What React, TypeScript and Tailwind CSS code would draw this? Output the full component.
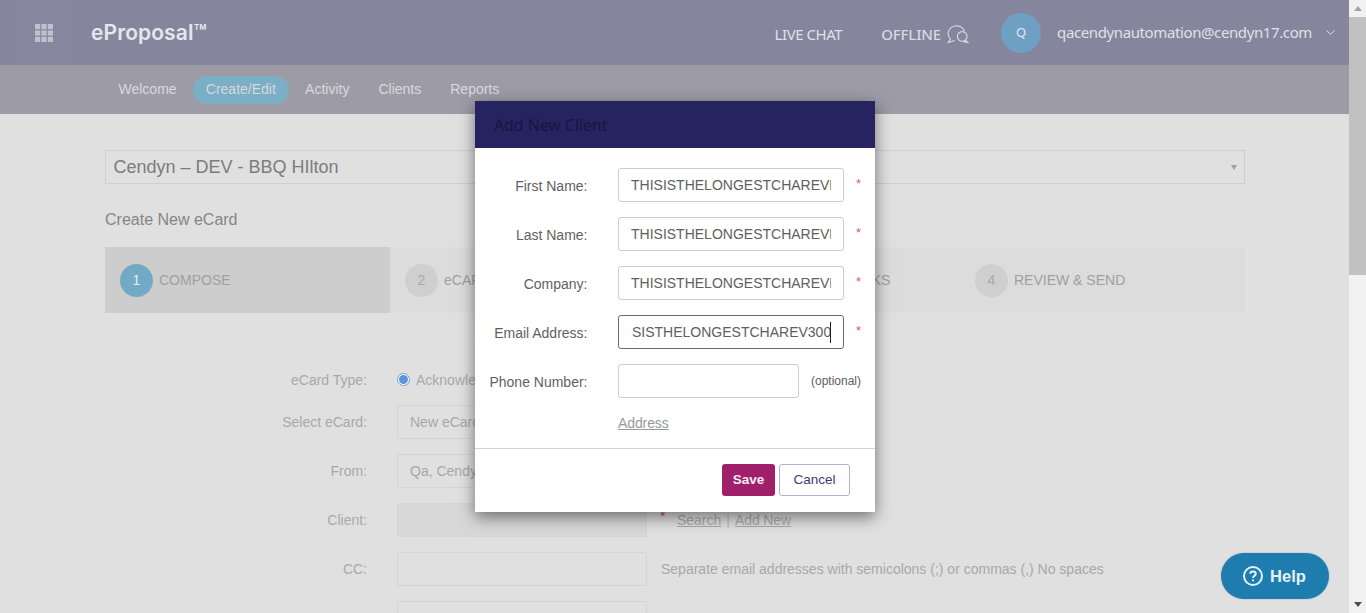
import React from "react";
import { ChevronDown } from "lucide-react";

const arial = "font-['Liberation_Sans',Arial,sans-serif]";

function NavItem({ label, active }: { label: string; active?: boolean }) {
  return (
    <span className={`flex h-[28px] items-center rounded-full px-[13px] text-[14px] text-[#d8d8df] ${active ? "w-[96.5px] justify-center bg-[#7aafc6]" : ""}`}>
      {label}
    </span>
  );
}

function Step({ n, label, active, w }: { n: number; label: string; active?: boolean; w: string }) {
  return (
    <div className={`flex h-full items-center gap-[6px] pl-[15px] ${w} ${active ? "bg-[#cdcdcd]" : ""}`}>
      <span className={`flex h-[33px] w-[33px] items-center justify-center rounded-full text-[14px] ${active ? "bg-[#72a9c4] text-[#e4eef3]" : "bg-[#cfcfcf] text-[#a8a8a8]"}`}>
        {n}
      </span>
      <span className="text-[14px] text-[#a0a0a0]">{label}</span>
    </div>
  );
}

function BackRow({ label, children, h, mb }: { label: string; children: React.ReactNode; h: string; mb: string }) {
  return (
    <div className={`flex items-center ${h} ${mb}`}>
      <span className="w-[262px] text-right text-[14px] text-[#a8a8a8]">{label}</span>
      <div className="ml-[30px] flex items-center">{children}</div>
    </div>
  );
}

const backBox = "h-[34px] w-[250px] rounded-[2px] border border-[#d4d4d4] px-[12px] text-[14px] leading-[32px] text-[#a8a8a8]";

function ModalRow({ label, value, focused }: { label: string; value: string; focused?: boolean }) {
  return (
    <div className="mb-[15px] flex h-[34px] items-center">
      <span className="w-[112.5px] pt-[2px] text-right text-[14px] text-[#5f5f5f]">{label}</span>
      <div className={`ml-[30.5px] flex h-[34px] w-[226px] items-center overflow-hidden rounded-[3px] border px-[12px] ${focused ? "border-[#6a6a6a]" : "border-[#cccccc]"}`}>
        <span className={`block w-[200px] overflow-hidden whitespace-nowrap text-[14px] text-[#606060] ${focused ? "border-r border-[#222222] pl-[1px]" : ""}`}>{value}</span>
      </div>
      <span className="ml-[12px] -mt-[3px] text-[13px] text-[#df5a72]">*</span>
    </div>
  );
}

export default function App() {
  return (
    <div className={`relative flex h-[613px] w-[1366px] overflow-hidden bg-[#e0e0e0] ${arial}`}>
      <div className="flex h-full w-[1349px] flex-col">
        <header className="flex h-[65px] shrink-0 items-center bg-[#85859d]">
          <div className="ml-[15px] flex h-full w-[60px] items-center bg-[#86869e] pl-[20px]">
            <svg width="18" height="18" viewBox="0 0 18 18" fill="#bfbfcd" aria-hidden="true">
              <rect x="0" y="0" width="5.2" height="5.2" /><rect x="6.4" y="0" width="5.2" height="5.2" /><rect x="12.8" y="0" width="5.2" height="5.2" />
              <rect x="0" y="6.4" width="5.2" height="5.2" /><rect x="6.4" y="6.4" width="5.2" height="5.2" /><rect x="12.8" y="6.4" width="5.2" height="5.2" />
              <rect x="0" y="12.8" width="5.2" height="5.2" /><rect x="6.4" y="12.8" width="5.2" height="5.2" /><rect x="12.8" y="12.8" width="5.2" height="5.2" />
            </svg>
          </div>
          <span className="ml-[16px] mt-[1px] font-['Inter',sans-serif] text-[21px] font-semibold tracking-[0.1px] text-[#e6e6ec]">eProposal™</span>
          <div className="ml-auto flex items-center">
            <span className="mt-[3px] font-['Noto_Sans',sans-serif] text-[15px] tracking-[-0.45px] text-[#e0e0e8]">LIVE CHAT</span>
            <span className="ml-[39px] mt-[3px] font-['Noto_Sans',sans-serif] text-[15px] font-medium tracking-[-0.15px] text-[#d8d8e2]">OFFLINE</span>
            <svg className="ml-[6px] mt-[3px]" width="22" height="19" viewBox="0 0 22 19" fill="none" stroke="#d8d8e2" strokeWidth="1.1" aria-hidden="true">
              <path d="M3.5 14 C0.8 11 0.6 7 2.5 4.2 C5 0.6 10.5 0 14 2 C16 3.2 17 4.8 17.2 6.4" />
              <path d="M3.5 14 L1.2 17.6 L7.5 15.6" />
              <circle cx="15.2" cy="11.4" r="4.8" />
              <path d="M18.2 15 L20.8 17.4 L15.5 16.4" />
            </svg>
            <span className="ml-[32px] flex h-[40px] w-[40px] items-center justify-center rounded-full bg-[#6f9fc2] font-['Noto_Sans',sans-serif] text-[13px] text-[#dfe8f0]">Q</span>
            <span className="ml-[16px] -mt-[1px] font-['Noto_Sans',sans-serif] text-[15px] tracking-[-0.39px] text-[#e0e0e8]">qacendynautomation@cendyn17.com</span>
            <ChevronDown className="ml-[11px] mr-[11px] text-[#e0e0e8]" size={15} strokeWidth={1.5} />
          </div>
        </header>

        <nav className="flex h-[49px] shrink-0 items-center gap-[3px] bg-[#9d9ca6] pl-[105.5px]">
          <NavItem label="Welcome" />
          <NavItem label="Create/Edit" active />
          <NavItem label="Activity" />
          <NavItem label="Clients" />
          <NavItem label="Reports" />
        </nav>

        <main className="flex-1 px-[105px] pt-[36px]">
          <div className="flex h-[34px] w-[1140px] items-center justify-between border border-[#cfcfcf] pl-[7.5px] pr-[7px]">
            <span className="text-[18px] text-[#7c7c7c]">Cendyn – DEV - BBQ HIlton</span>
            <span className="h-0 w-0 border-x-[3px] border-t-[5px] border-x-transparent border-t-[#9f9f9f]" />
          </div>
          <h2 className="mt-[26px] text-[16px] leading-[20px] text-[#858585]">Create New eCard</h2>
          <div className="mt-[17px] flex h-[66px] w-[1140px] items-center bg-[#dcdcdc]">
            <Step n={1} label="COMPOSE" active w="w-[285px]" />
            <Step n={2} label="eCARD" w="w-[406px]" />
            <Step n={3} label="LINKS" w="w-[164px]" />
            <Step n={4} label="REVIEW & SEND" w="w-[285px]" />
          </div>
          <div className="mt-[50px]">
            <BackRow label="eCard Type:" h="h-[34px]" mb="mb-[8px]">
              <span className="-mt-[2px] flex h-[13px] w-[13px] items-center justify-center rounded-full border border-[#6f9ed8] bg-white">
                <span className="h-[9px] w-[9px] rounded-full bg-[#5c93dc]" />
              </span>
              <span className="ml-[6px] text-[14px] text-[#a8a8a8]">Acknowledgement</span>
            </BackRow>
            <BackRow label="Select eCard:" h="h-[34px]" mb="mb-[15px]">
              <div className={backBox}>New eCard</div>
            </BackRow>
            <BackRow label="From:" h="h-[34px]" mb="mb-[15px]">
              <div className={backBox}>Qa, Cendyn</div>
            </BackRow>
            <BackRow label="Client:" h="h-[34px]" mb="mb-[15px]">
              <div className={`${backBox} bg-[#d8d8d8]`} />
              <span className="ml-[13px] -mt-[8px] text-[14px] text-[#b8506e]">*</span>
              <span className="ml-[11.5px] text-[14px] text-[#ababab] underline">Search</span>
              <span className="mx-[5px] text-[14px] text-[#bcbcbc]">|</span>
              <span className="text-[14px] tracking-[-0.1px] text-[#ababab] underline">Add New</span>
            </BackRow>
            <BackRow label="CC:" h="h-[34px]" mb="mb-[15px]">
              <div className={backBox} />
              <span className="ml-[14px] text-[14px] text-[#a8a8a8]">Separate email addresses with semicolons (;) or commas (,) No spaces</span>
            </BackRow>
            <BackRow label="" h="h-[34px]" mb="mb-0">
              <div className={backBox} />
            </BackRow>
          </div>
        </main>
      </div>

      <aside className="relative flex h-full w-[17px] shrink-0 flex-col items-center bg-[#f1f1f1]">
        <span className="mt-[6px] h-0 w-0 border-x-[4px] border-b-[5px] border-x-transparent border-b-[#a3a3a3]" />
        <span className="mt-[6px] h-[258px] w-full bg-[#c1c1c1]" />
        <span className="mb-[6px] mt-auto h-0 w-0 border-x-[4px] border-t-[5px] border-x-transparent border-t-[#505050]" />
      </aside>

      <section className="absolute left-[475px] top-[101px] flex h-[411px] w-[400px] flex-col bg-white shadow-[0_5px_15px_rgba(0,0,0,0.5)]">
        <div className="flex h-[47px] shrink-0 items-center bg-[#252460] pl-[19px] pt-[1px] font-['Noto_Sans',sans-serif] text-[16px] tracking-[-0.1px] text-[#17163f]">Add New Client</div>
        <div className="flex-1 pt-[20px]">
          <ModalRow label="First Name:" value="THISISTHELONGESTCHAREVER" />
          <ModalRow label="Last Name:" value="THISISTHELONGESTCHAREVER" />
          <ModalRow label="Company:" value="THISISTHELONGESTCHAREVER" />
          <ModalRow label="Email Address:" value="SISTHELONGESTCHAREV300" focused />
          <div className="flex h-[34px] items-center">
            <span className="w-[112.5px] pt-[2px] text-right text-[14px] text-[#5f5f5f]">Phone Number:</span>
            <div className="ml-[30.5px] h-[34px] w-[181px] rounded-[3px] border border-[#cccccc]" />
            <span className="ml-[12px] text-[12px] text-[#606060]">(optional)</span>
          </div>
          <div className="ml-[143px] mt-[16px] text-[14px] leading-[18px] tracking-[-0.1px] text-[#999999] underline">Address</div>
        </div>
        <div className="flex h-[64px] shrink-0 items-center justify-end gap-[4px] border-t border-[#d4d4d4] pb-[2px] pr-[25px]">
          <span className="flex h-[32px] w-[53px] items-center justify-center rounded-[3px] bg-[#a01f6b] pt-[2px] text-[13.5px] font-bold text-[#f8edf3]">Save</span>
          <span className="flex h-[32px] w-[71px] items-center justify-center rounded-[3px] border border-[#b4b0d6] pt-[2px] text-[13.5px] text-[#3c3a75]">Cancel</span>
        </div>
      </section>

      <div className="absolute left-[1221px] top-[553px] flex h-[46px] w-[108px] items-center justify-center gap-[7px] rounded-full bg-[#1e7cae] shadow-[0_0_2px_rgba(30,124,174,0.4)]">
        <svg className="-ml-[1px]" width="20" height="20" viewBox="0 0 20 20" fill="none" stroke="#e4f1f8" strokeWidth="2" aria-hidden="true">
          <circle cx="10" cy="10" r="9" />
          <path d="M7.2 7.8 C7.2 4.6 12.8 4.6 12.8 7.8 C12.8 10 10 9.8 10 12" />
          <path d="M10 13.6 V15.2" />
        </svg>
        <span className="pt-[1px] text-[16.5px] font-bold text-[#e4f1f8]">Help</span>
      </div>
    </div>
  );
}
